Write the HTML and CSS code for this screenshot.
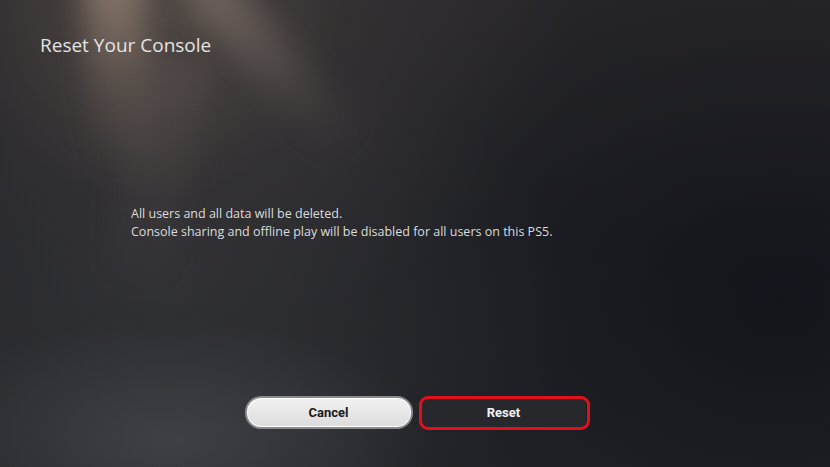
FILE: index.html
```html
<!DOCTYPE html>
<html>
<head>
<meta charset="utf-8">
<link rel="stylesheet" href="styles.css">
</head>
<body>
<div class="screen">
  <div class="rays">
    <div class="beam beam-a"></div>
    <div class="beam beam-b"></div>
    <div class="beam beam-c"></div>
  </div>
  <h1 class="title">Reset Your Console</h1>
  <div class="message">
    <p>All users and all data will be deleted.</p>
    <p>Console sharing and offline play will be disabled for all users on this PS5.</p>
  </div>
  <div class="actions">
    <button class="btn btn-cancel">Cancel</button>
    <button class="btn btn-reset">Reset</button>
  </div>
</div>
</body>
</html>
```
FILE: styles.css
```css
html, body {
  margin: 0;
  padding: 0;
  background: #1f2025;
}
.screen {
  position: relative;
  width: 830px;
  height: 467px;
  overflow: hidden;
  box-sizing: border-box;
  display: flex;
  flex-direction: column;
  font-family: "Open Sans", "Noto Sans", sans-serif;
  color: #e6e6e6;
  background:
    radial-gradient(ellipse 260px 120px at 170px 440px, rgba(80,82,88,0.55), rgba(80,82,88,0) 100%),
    radial-gradient(ellipse 420px 260px at 160px 300px, rgba(60,60,64,0.5), rgba(60,60,64,0) 100%),
    radial-gradient(ellipse 500px 400px at 780px 300px, rgba(14,15,22,0.7), rgba(14,15,22,0) 100%),
    linear-gradient(180deg, #28272b 0%, #222328 50%, #25262a 100%);
}
.rays {
  position: absolute;
  left: 0;
  top: 0;
  width: 830px;
  height: 467px;
  pointer-events: none;
  background:
    radial-gradient(ellipse 200px 200px at 150px 0px, rgba(100,88,80,0.5), rgba(100,88,80,0) 100%),
    radial-gradient(ellipse 380px 300px at 200px 20px, rgba(80,72,68,0.45), rgba(80,72,68,0) 100%);
}
.beam {
  position: absolute;
  filter: blur(14px);
  transform-origin: top center;
}
.beam-a {
  left: 82px;
  top: -30px;
  width: 60px;
  height: 200px;
  background: linear-gradient(180deg, rgba(150,130,115,0.85), rgba(120,105,95,0.35) 60%, rgba(120,105,95,0));
  transform: rotate(-4deg);
}
.beam-b {
  left: 175px;
  top: -20px;
  width: 50px;
  height: 230px;
  background: linear-gradient(180deg, rgba(140,125,115,0.6), rgba(110,100,95,0.25) 60%, rgba(110,100,95,0));
  transform: rotate(-42deg);
}
.beam-c {
  left: 140px;
  top: 60px;
  width: 70px;
  height: 240px;
  background: linear-gradient(180deg, rgba(100,90,85,0.35), rgba(100,90,85,0));
  transform: rotate(10deg);
}
.title {
  position: relative;
  margin: 0;
  padding: 32px 0 0 40px;
  font-size: 19px;
  font-weight: 400;
  line-height: 26px;
  color: #e4e4e4;
}
.message {
  position: relative;
  margin: 147px 0 0 131px;
  font-size: 12.5px;
  line-height: 18px;
  color: #dcdcdc;
}
.message p {
  margin: 0;
}
.actions {
  position: relative;
  margin-top: auto;
  margin-bottom: 38px;
  display: flex;
  justify-content: center;
  align-items: center;
  gap: 9px;
}
.btn {
  position: relative;
  box-sizing: border-box;
  font-family: "Roboto", "Noto Sans", sans-serif;
  font-weight: 700;
  font-size: 13px;
  border-radius: 16px;
  cursor: pointer;
}
.btn-cancel {
  width: 168px;
  height: 33px;
  background: linear-gradient(180deg, #f2f2f2, #dcdcdc);
  color: #1a1a1a;
  border: 2px solid #8a8a8a;
  box-shadow: inset 0 0 0 1px #ffffff;
}
.btn-reset {
  width: 164px;
  height: 28px;
  background: #27282c;
  color: #f2f2f2;
  border: none;
  border-radius: 4px;
}
.btn-reset::after {
  content: "";
  position: absolute;
  left: -3px;
  top: -3px;
  right: -4px;
  bottom: -3px;
  border: 3px solid #e3101c;
  border-radius: 9px;
}
```
